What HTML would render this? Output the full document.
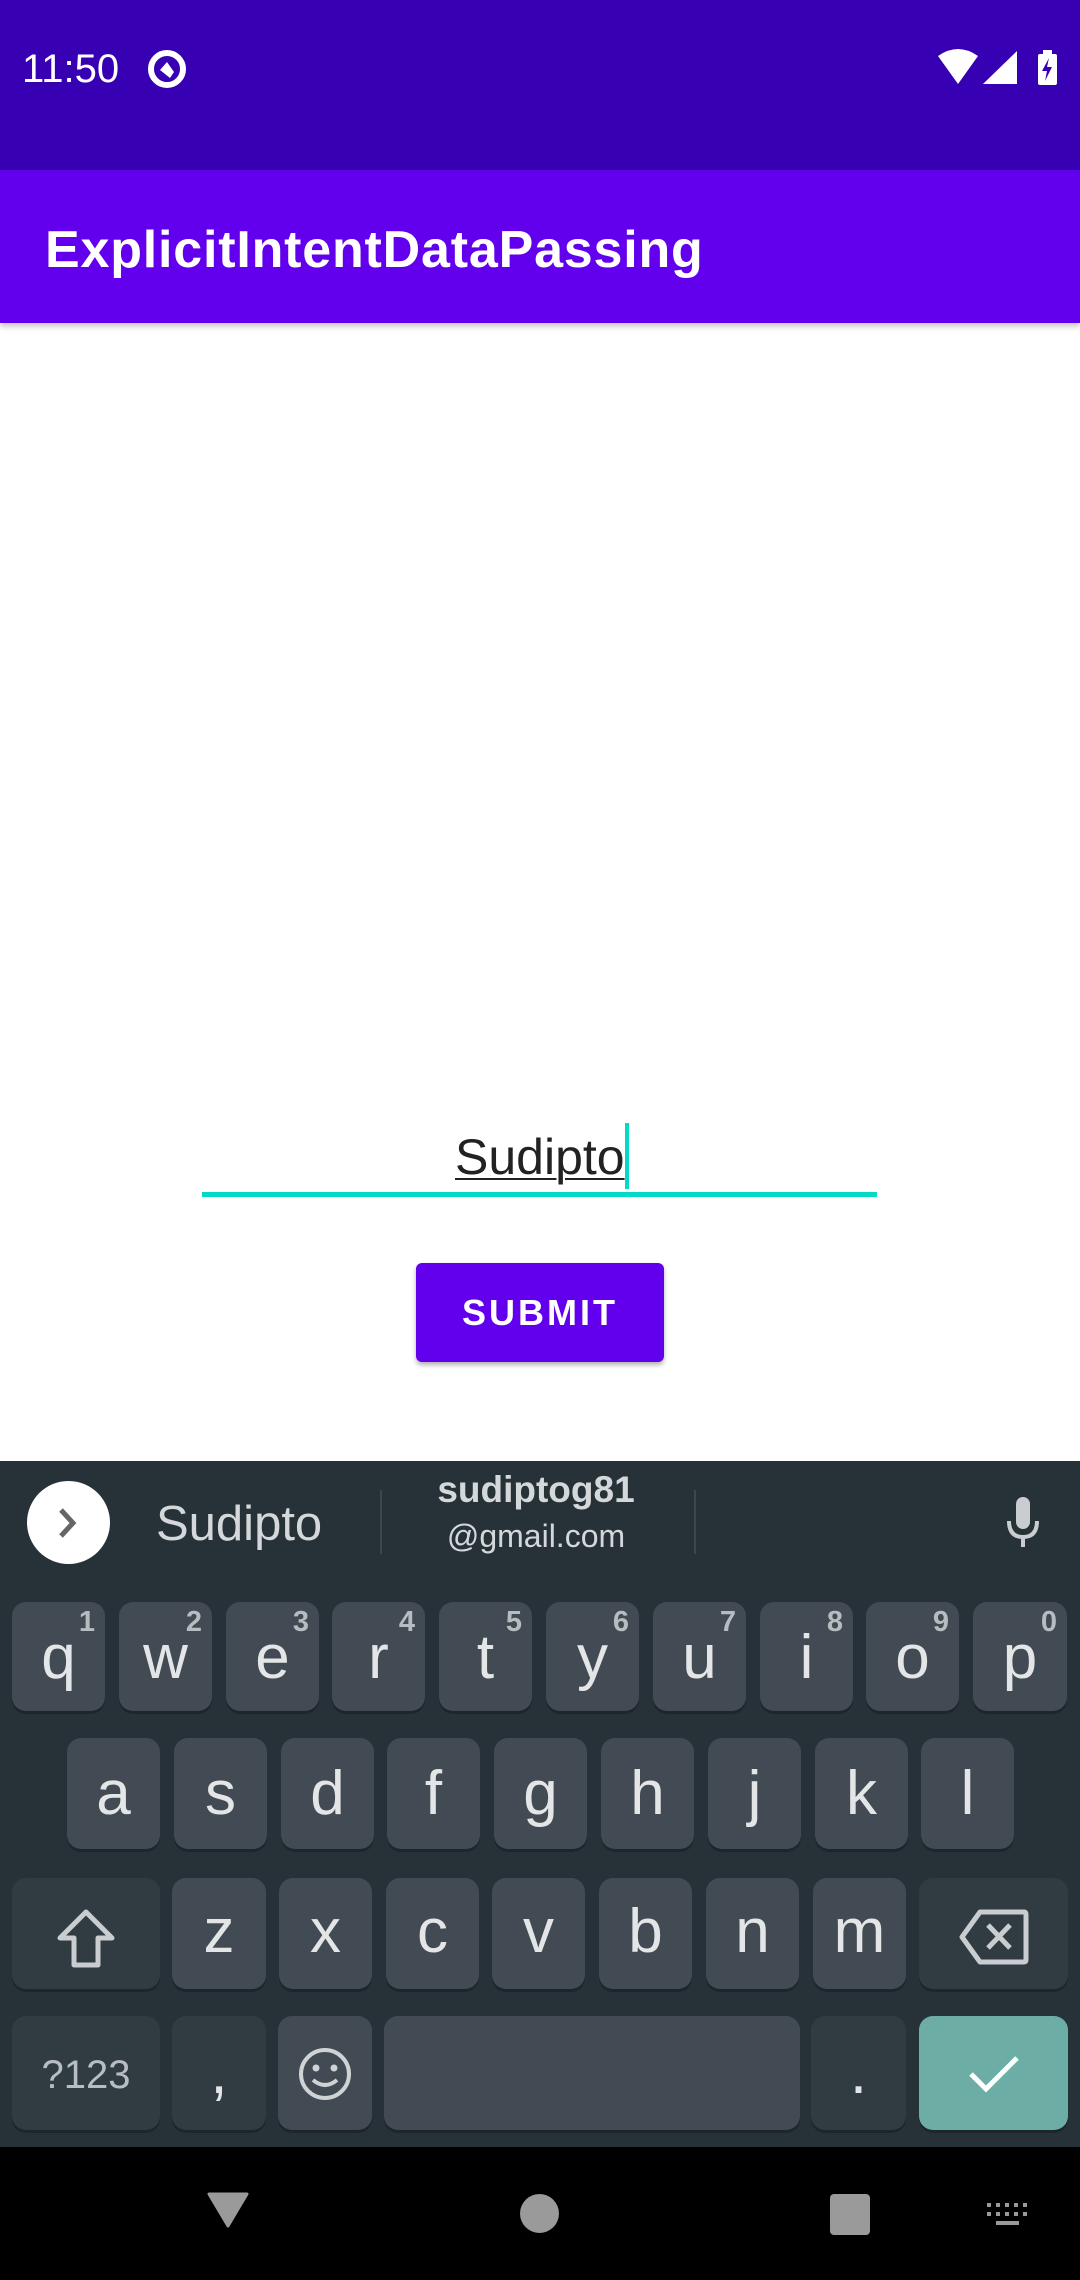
<!DOCTYPE html>
<html><head><meta charset="utf-8"><style>
*{margin:0;padding:0;box-sizing:border-box}
body{width:1080px;height:2280px;position:relative;overflow:hidden;background:#fff;font-family:"Liberation Sans",sans-serif}
.a{position:absolute}
.k{position:absolute;border-radius:14px;background:#424b53;color:#e3e5e6;font-size:62px;text-align:center;box-shadow:0 3px 0 #1e262b}
.d{background:#313b42}
.r1{top:1602px;height:109px;line-height:112px}
.r2{top:1738px;height:111px;line-height:112px}
.r3{top:1878px;height:111px;line-height:108px}
.r4{top:2016px;height:114px}
.n{position:absolute;right:10px;top:2px;font-size:29px;line-height:36px;color:#b6bcc0;font-weight:bold}
</style></head><body>
<div class="a" style="left:0;top:0;width:1080px;height:170px;background:#3700b3"></div>
<div class="a" style="left:22px;top:46px;font-size:40px;color:#fff;line-height:46px">11:50</div>
<svg class="a" style="left:146px;top:48px" width="42" height="42" viewBox="0 0 42 42"><circle cx="21" cy="21" r="16" fill="none" stroke="#fff" stroke-width="6"/><path d="M14 22 L21 14 L28 24 L24 30Z" fill="#fff"/></svg>
<svg class="a" style="left:936px;top:48px" width="125" height="40" viewBox="0 0 125 40"><path d="M2 8 Q22 -6 42 8 L22 36Z" fill="#fff"/><path d="M47 36 L81 3 L81 36Z" fill="#fff"/><rect x="102" y="6" width="19" height="31" rx="2" fill="#fff"/><rect x="107" y="2" width="9" height="5" fill="#fff"/><path d="M113 10 L106 23 L111 23 L109 33 L116 19 L111 19Z" fill="#3700b3"/></svg>
<div class="a" style="left:0;top:170px;width:1080px;height:153px;background:#6200ee;box-shadow:0 3px 6px rgba(0,0,0,.25)"></div>
<div class="a" style="left:45px;top:220px;font-size:52px;color:#fff;font-weight:bold;line-height:60px;letter-spacing:0.8px">ExplicitIntentDataPassing</div>
<div class="a" style="left:202px;top:1192px;width:675px;height:5px;background:#03dac5"></div>
<div class="a" style="left:455px;top:1122px;font-size:50px;color:#222;line-height:70px;text-decoration:underline;text-decoration-thickness:2px;text-underline-offset:4px">Sudipto</div>
<div class="a" style="left:625px;top:1123px;width:4px;height:66px;background:#03dac5"></div>
<div class="a" style="left:416px;top:1263px;width:248px;height:99px;background:#6200ee;border-radius:6px;box-shadow:0 3px 5px rgba(0,0,0,.3);color:#fff;font-size:36px;font-weight:bold;text-align:center;line-height:99px;letter-spacing:3px">SUBMIT</div>
<div class="a" style="left:0;top:1461px;width:1080px;height:686px;background:#263238"></div>
<div class="a" style="left:27px;top:1481px;width:83px;height:83px;border-radius:50%;background:#fff"></div>
<svg class="a" style="left:55px;top:1507px" width="26" height="32" viewBox="0 0 26 32"><path d="M6 3 L18 16 L6 29" fill="none" stroke="#666" stroke-width="5"/></svg>
<div class="a" style="left:156px;top:1496px;font-size:49px;color:#d5d8da;line-height:56px">Sudipto</div>
<div class="a" style="left:380px;top:1490px;width:2px;height:64px;background:#3c474e"></div>
<div class="a" style="left:694px;top:1490px;width:2px;height:64px;background:#3c474e"></div>
<div class="a" style="left:386px;top:1466px;width:300px;text-align:center;font-size:37px;color:#d5d8da;font-weight:bold;line-height:48px">sudiptog81</div>
<div class="a" style="left:386px;top:1514px;width:300px;text-align:center;font-size:32px;color:#d5d8da;line-height:44px">@gmail.com</div>
<svg class="a" style="left:1004px;top:1495px" width="38" height="56" viewBox="0 0 38 56"><rect x="12" y="2" width="14" height="32" rx="7" fill="#c9cdd0"/><path d="M5 26 Q5 42 19 42 Q33 42 33 26" fill="none" stroke="#c9cdd0" stroke-width="4"/><rect x="17" y="42" width="4" height="10" fill="#c9cdd0"/></svg>

<div class="k r1" style="left:12px;width:93px">q<span class="n">1</span></div>
<div class="k r1" style="left:119px;width:93px">w<span class="n">2</span></div>
<div class="k r1" style="left:226px;width:93px">e<span class="n">3</span></div>
<div class="k r1" style="left:332px;width:93px">r<span class="n">4</span></div>
<div class="k r1" style="left:439px;width:93px">t<span class="n">5</span></div>
<div class="k r1" style="left:546px;width:93px">y<span class="n">6</span></div>
<div class="k r1" style="left:653px;width:93px">u<span class="n">7</span></div>
<div class="k r1" style="left:760px;width:93px">i<span class="n">8</span></div>
<div class="k r1" style="left:866px;width:93px">o<span class="n">9</span></div>
<div class="k r1" style="left:973px;width:94px">p<span class="n">0</span></div>

<div class="k r2" style="left:67px;width:93px">a</div>
<div class="k r2" style="left:174px;width:93px">s</div>
<div class="k r2" style="left:281px;width:93px">d</div>
<div class="k r2" style="left:387px;width:93px">f</div>
<div class="k r2" style="left:494px;width:93px">g</div>
<div class="k r2" style="left:601px;width:93px">h</div>
<div class="k r2" style="left:708px;width:93px">j</div>
<div class="k r2" style="left:815px;width:93px">k</div>
<div class="k r2" style="left:921px;width:93px">l</div>

<div class="k r3 d" style="left:12px;width:148px"><svg style="margin-top:30px" width="62" height="62" viewBox="0 0 62 62"><path d="M31 4 L57 30 L43 30 L43 57 L19 57 L19 30 L5 30Z" fill="none" stroke="#c9cdd0" stroke-width="5" stroke-linejoin="round"/></svg></div>
<div class="k r3" style="left:172px;width:94px">z</div>
<div class="k r3" style="left:279px;width:93px">x</div>
<div class="k r3" style="left:386px;width:93px">c</div>
<div class="k r3" style="left:492px;width:93px">v</div>
<div class="k r3" style="left:599px;width:93px">b</div>
<div class="k r3" style="left:706px;width:93px">n</div>
<div class="k r3" style="left:813px;width:93px">m</div>
<div class="k r3 d" style="left:919px;width:149px"><svg style="margin-top:30px" width="72" height="58" viewBox="0 0 72 58"><path d="M22 4 L66 4 Q68 4 68 6 L68 52 Q68 54 66 54 L22 54 L4 29Z" fill="none" stroke="#c9cdd0" stroke-width="5" stroke-linejoin="round"/><path d="M30 17 L52 40 M52 17 L30 40" stroke="#c9cdd0" stroke-width="5"/></svg></div>

<div class="k r4 d" style="left:12px;width:148px;font-size:40px;line-height:118px;color:#b8bdc1">?123</div>
<div class="k r4 d" style="left:172px;width:94px;line-height:114px">,</div>
<div class="k r4" style="left:278px;width:94px"><svg style="margin-top:30px" width="56" height="56" viewBox="0 0 56 56"><circle cx="28" cy="28" r="24" fill="none" stroke="#d0d3d5" stroke-width="4"/><circle cx="19" cy="22" r="3.5" fill="#d0d3d5"/><circle cx="37" cy="22" r="3.5" fill="#d0d3d5"/><path d="M16 34 Q28 44 40 34" fill="none" stroke="#d0d3d5" stroke-width="4"/></svg></div>
<div class="k r4" style="left:384px;width:416px"></div>
<div class="k r4 d" style="left:811px;width:95px;line-height:114px">.</div>
<div class="k r4" style="left:919px;width:149px;background:#6cada6"><svg style="margin-top:38px" width="52" height="40" viewBox="0 0 52 40"><path d="M3 20 L18 35 L49 4" fill="none" stroke="#fff" stroke-width="5"/></svg></div>

<div class="a" style="left:0;top:2147px;width:1080px;height:133px;background:#000"></div>
<svg class="a" style="left:207px;top:2192px" width="42" height="36" viewBox="0 0 42 36"><path d="M2 2 L40 2 L21 34Z" fill="#9a9a9a" stroke="#9a9a9a" stroke-width="3" stroke-linejoin="round"/></svg>
<div class="a" style="left:520px;top:2194px;width:39px;height:39px;border-radius:50%;background:#9a9a9a"></div>
<div class="a" style="left:830px;top:2194px;width:40px;height:41px;border-radius:4px;background:#9a9a9a"></div>
<svg class="a" style="left:987px;top:2203px" width="42" height="24" viewBox="0 0 42 24"><g fill="#9a9a9a"><rect x="0" y="0" width="4" height="4"/><rect x="9" y="0" width="4" height="4"/><rect x="18" y="0" width="4" height="4"/><rect x="27" y="0" width="4" height="4"/><rect x="36" y="0" width="4" height="4"/><rect x="0" y="9" width="4" height="4"/><rect x="9" y="9" width="4" height="4"/><rect x="18" y="9" width="4" height="4"/><rect x="27" y="9" width="4" height="4"/><rect x="36" y="9" width="4" height="4"/><rect x="9" y="18" width="23" height="4"/></g></svg>
</body></html>
